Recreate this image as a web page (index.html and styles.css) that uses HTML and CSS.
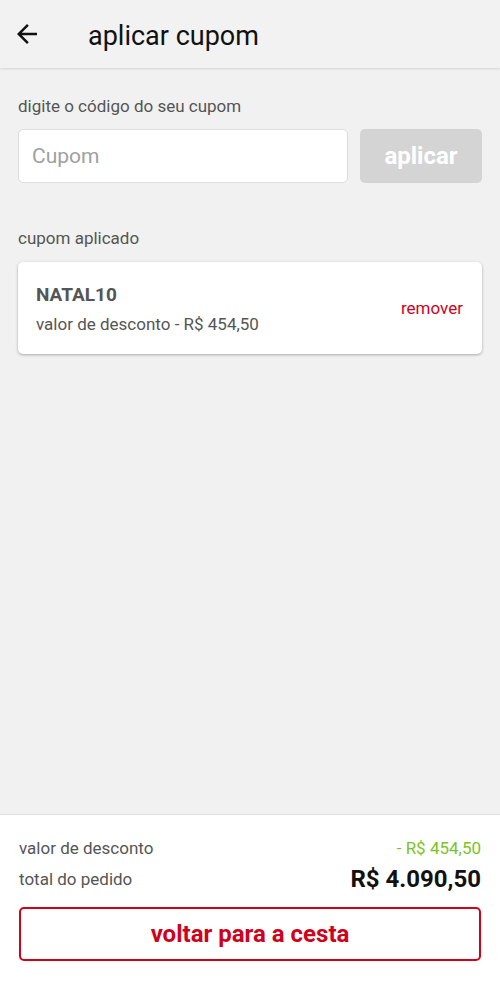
FILE: index.html
```html
<!doctype html>
<html lang="pt-BR">
<head>
    <meta charset="UTF-8">
    <meta name="viewport" content="width=device-width, initial-scale=1.0">
    <title>aplicar cupom</title>
    <link rel="stylesheet" href="styles.css">
</head>
<body>
    <header class="topbar">
        <button class="back" aria-label="voltar">
            <svg width="30" height="30" viewBox="0 0 24 24"><path d="M20 11H7.830l5.59-5.59L12 4l-8 8 8 8 1.41-1.41L7.83 13H20v-2z" fill="#111"/></svg>
        </button>
        <h1>aplicar cupom</h1>
    </header>

    <main class="content">
        <p class="label">digite o código do seu cupom</p>
        <div class="coupon-form">
            <input class="coupon-input" type="text" placeholder="Cupom">
            <button class="apply" disabled>aplicar</button>
        </div>

        <p class="label applied-label">cupom aplicado</p>
        <div class="coupon-card">
            <div class="coupon-info">
                <p class="coupon-code">NATAL10</p>
                <p class="coupon-value">valor de desconto - R$ 454,50</p>
            </div>
            <a class="remove" href="#">remover</a>
        </div>
    </main>

    <footer class="summary">
        <div class="summary-row">
            <span>valor de desconto</span>
            <span class="discount">- R$ 454,50</span>
        </div>
        <div class="summary-row">
            <span>total do pedido</span>
            <span class="total">R$ 4.090,50</span>
        </div>
        <button class="back-cart">voltar para a cesta</button>
    </footer>
</body>
</html>
```

FILE: styles.css
```css
html, body {
    height: 100%;
}

body {
    margin: 0;
    display: flex;
    flex-direction: column;
    background-color: #f1f1f1;
    font-family: Roboto, "Liberation Sans", sans-serif;
    color: #555;
}

p {
    margin: 0;
}

.topbar {
    height: 68px;
    flex-shrink: 0;
    display: flex;
    align-items: center;
    background-color: #f2f2f2;
    box-shadow: 0 1px 2px rgba(0, 0, 0, .12);
    position: relative;
}

.back {
    border: 0;
    background: none;
    padding: 0;
    margin-left: 12px;
    width: 30px;
    height: 30px;
    display: flex;
}

.topbar h1 {
    margin: 3px 0 0 46px;
    font-size: 27px;
    font-weight: 400;
    color: #111;
}

.content {
    flex: 1;
    padding: 28px 18px 0 18px;
}

.label {
    font-size: 17px;
    color: #555;
}

.coupon-form {
    display: flex;
    gap: 12px;
    margin-top: 13px;
}

.coupon-input {
    flex: 1;
    min-width: 0;
    height: 54px;
    box-sizing: border-box;
    border: 1px solid #dcdcdc;
    border-radius: 5px;
    padding: 0 13px;
    font-family: inherit;
    font-size: 21px;
    background-color: white;
}

.coupon-input::placeholder {
    color: #a0a0a0;
}

.apply {
    width: 122px;
    height: 54px;
    border: 0;
    border-radius: 5px;
    background-color: #d4d4d4;
    color: white;
    font-family: inherit;
    font-size: 24px;
    font-weight: 700;
}

.applied-label {
    margin-top: 45px;
}

.coupon-card {
    margin-top: 14px;
    height: 92px;
    box-sizing: border-box;
    background-color: white;
    border-radius: 5px;
    box-shadow: 0 1px 3px rgba(0, 0, 0, .3);
    display: flex;
    align-items: center;
    justify-content: space-between;
    padding: 0 19px 0 18px;
}

.coupon-code {
    font-size: 19px;
    font-weight: 700;
    color: #555;
}

.coupon-value {
    font-size: 17px;
    margin-top: 8px;
}

.remove {
    color: #d0021b;
    text-decoration: none;
    font-size: 17px;
}

.summary {
    flex-shrink: 0;
    background-color: white;
    border-top: 1px solid #e0e0e0;
    padding: 20px 19px 26px 19px;
}

.summary-row {
    display: flex;
    justify-content: space-between;
    align-items: center;
    font-size: 17px;
    color: #555;
    height: 32px;
}

.summary-row:first-child {
    height: 26px;
    margin-bottom: 2px;
}

.discount {
    color: #7cc423;
}

.total {
    font-size: 24px;
    font-weight: 700;
    color: #111;
}

.back-cart {
    margin-top: 12px;
    width: 100%;
    height: 54px;
    background-color: white;
    border: 2px solid #d0021b;
    border-radius: 5px;
    color: #d0021b;
    font-family: inherit;
    font-size: 24px;
    font-weight: 700;
}
```
